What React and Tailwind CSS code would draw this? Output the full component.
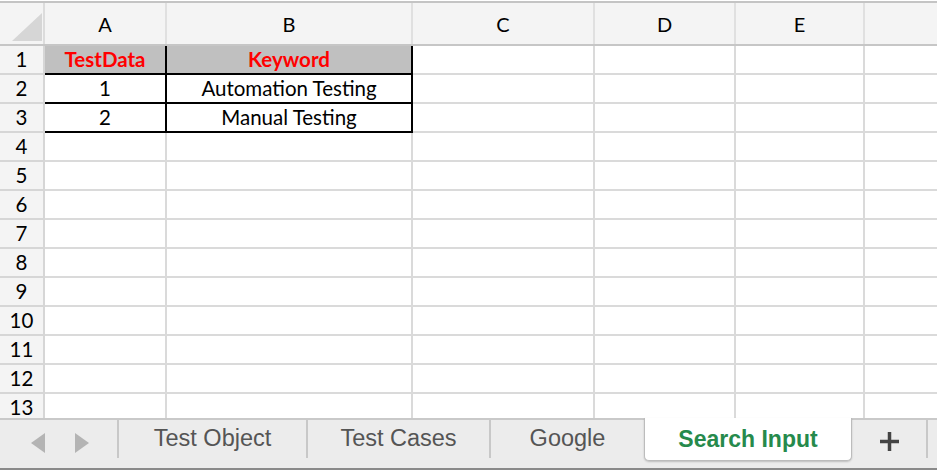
import React from "react";

// column widths include the 2px right grid line
const columns = [
  { label: "A", w: "w-[122px]" },
  { label: "B", w: "w-[246px]" },
  { label: "C", w: "w-[182px]" },
  { label: "D", w: "w-[141px]" },
  { label: "E", w: "w-[129px]" },
  { label: "", w: "w-[100px]" },
];

const data = [
  ["TestData", "Keyword"],
  ["1", "Automation Testing"],
  ["2", "Manual Testing"],
];

const rows = Array.from({ length: 13 }, (_, i) => i + 1);

function Cell({ row, col }) {
  const inTable = row <= 3 && col <= 1;
  const isHead = row === 1 && inTable;
  const value = inTable ? data[row - 1][col] : "";

  let cls = "h-[29px] shrink-0 border-r-2 border-b-2 flex items-center justify-center text-[20.5px] leading-none ";
  cls += columns[col].w + " ";
  if (inTable) {
    cls += "border-r-black border-b-black ";
  } else {
    cls += "border-r-[#dadada] border-b-[#dadada] ";
  }
  if (isHead) {
    cls += "bg-[#c0c0c0] text-[#ff0000] font-bold";
  } else {
    cls += "bg-white text-black";
  }

  return <div className={cls}>{value}</div>;
}

export default function App() {
  return (
    <div className="w-[937px] h-[470px] flex flex-col bg-white overflow-hidden pt-px font-['Lato',sans-serif]">
      {/* column header */}
      <div className="flex h-[45px] shrink-0 border-t-2 border-b-2 border-t-[#c4c4c4] border-b-[#c6c6c6] bg-[#f4f4f4]">
        <div className="w-[45px] shrink-0 border-r-2 border-[#dcdcdc] pl-[12px] pt-[10px]">
          <svg width="30" height="28" viewBox="0 0 30 28">
            <polygon points="30,0 30,28 0,28" fill="#d6d6d6" />
          </svg>
        </div>
        {columns.map((c) => (
          <div
            key={c.label || "f"}
            className={c.w + " shrink-0 border-r-2 border-[#e0e0e0] flex items-center justify-center text-[20px] text-black"}
          >
            {c.label}
          </div>
        ))}
      </div>

      {/* grid */}
      <div className="h-[372px] shrink-0 overflow-hidden">
        {rows.map((r) => (
          <div key={r} className="flex">
            <div className="w-[45px] h-[29px] shrink-0 border-r-2 border-b-2 border-[#d6d6d6] bg-[#f4f4f4] flex items-center justify-center text-[20.5px] leading-none text-black">
              {r}
            </div>
            {columns.map((c, ci) => (
              <Cell key={ci} row={r} col={ci} />
            ))}
          </div>
        ))}
      </div>

      {/* sheet tabs */}
      <div className="h-[52px] shrink-0 flex items-start bg-[#ececec] border-t-2 border-b-2 border-t-[#c9c9c9] border-b-[#8a8a8a] font-['Liberation_Sans',Arial,sans-serif] text-[23.5px] text-[#555]">
        <div className="w-[117px] shrink-0 flex items-start gap-[30px] pl-[31px] pt-[13px]">
          <svg width="14" height="20" viewBox="0 0 14 20">
            <polygon points="14,0 14,20 0,10" fill="#b4b4b4" />
          </svg>
          <svg width="14" height="20" viewBox="0 0 14 20">
            <polygon points="0,0 14,10 0,20" fill="#b4b4b4" />
          </svg>
        </div>
        <div className="w-[2px] h-[38px] shrink-0 bg-[#c8c8c8]" />
        <div className="w-[187px] h-[37px] shrink-0 flex items-center justify-center">Test Object</div>
        <div className="w-[2px] h-[38px] shrink-0 bg-[#c8c8c8]" />
        <div className="w-[181px] h-[37px] shrink-0 flex items-center justify-center">Test Cases</div>
        <div className="w-[2px] h-[38px] shrink-0 bg-[#c8c8c8]" />
        <div className="w-[153px] h-[37px] shrink-0 flex items-center justify-center">Google</div>
        <div className="w-[208px] h-[43px] -mt-[2px] shrink-0 flex items-center justify-center bg-white border-x border-b border-[#bcbcbc] rounded-b-[5px] shadow-[0_1px_2px_rgba(0,0,0,0.2)] font-bold text-[23px] text-[#268a4c]">
          Search Input
        </div>
        <div className="w-[74px] h-[42px] shrink-0 flex items-center justify-center">
          <svg width="21" height="21" viewBox="0 0 21 21">
            <line x1="10.5" y1="1" x2="10.5" y2="20" stroke="#444" strokeWidth="3.5" />
            <line x1="1" y1="10.5" x2="20" y2="10.5" stroke="#444" strokeWidth="3.5" />
          </svg>
        </div>
        <div className="w-[2px] h-[38px] shrink-0 bg-[#c8c8c8]" />
      </div>
    </div>
  );
}
